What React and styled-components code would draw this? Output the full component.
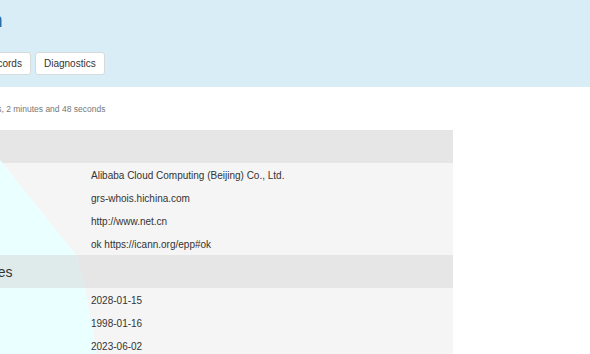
import React from "react";
import styled, { createGlobalStyle } from "styled-components";

const Global = createGlobalStyle`
  html, body { margin: 0; padding: 0; background: #fff; overflow: hidden; }
  body { font-family: "Liberation Sans", Arial, sans-serif; color: #333; }
`;

const Band = styled.header`
  background: #d9edf7;
  padding: 8px 0 12px;
`;

const Container = styled.div`
  margin-left: -100px;
  width: 553px;
`;

const Title = styled.h1`
  margin: 0;
  font-size: 20.5px;
  line-height: 23px;
  font-weight: 400;
  color: #2b6ca3;
  white-space: nowrap;
`;

const Nav = styled.nav`
  display: flex;
  gap: 4px;
  margin-top: 21px;
  padding-left: 2px;
`;

const Button = styled.button`
  height: 23px;
  padding: 0 8px;
  border: 1px solid #d6dadd;
  border-radius: 3px;
  background: #fff;
  color: #333;
  font-family: inherit;
  font-size: 10px;
  line-height: 1;
  white-space: nowrap;
`;

const Updated = styled.p`
  margin: 16px 0 15px;
  font-size: 8.5px;
  line-height: 12px;
  color: #777;
  white-space: nowrap;
`;

const TableWrap = styled.div`
  position: relative;
  width: 553px;
`;

const Overlay = styled.svg`
  position: absolute;
  left: 0;
  top: 0;
  z-index: 1;
  pointer-events: none;
`;

const Table = styled.table`
  width: 100%;
  border-collapse: collapse;
  border-spacing: 0;
  table-layout: fixed;
`;

const HeadCell = styled.th`
  height: 33px;
  padding: 0 13px;
  background: #e6e6e6;
  font-size: 14px;
  font-weight: 400;
  text-align: left;
  white-space: nowrap;
`;

const Cell = styled.td`
  height: 23px;
  padding: 0 6px;
  background: #f5f5f5;
  font-size: 10px;
  vertical-align: middle;
  white-space: nowrap;
`;

const Text = styled.span`
  position: relative;
  z-index: 2;
  top: ${(p) => (p.$nudge ? "1px" : "0")};
`;

const sections = [
  {
    title: "Registrar",
    rows: [
      ["Registrar", "Alibaba Cloud Computing (Beijing) Co., Ltd."],
      ["Whois Server", "grs-whois.hichina.com"],
      ["Referral URL", "http://www.net.cn"],
      ["Status", "ok https://icann.org/epp#ok"],
    ],
  },
  {
    title: "Important Dates",
    rows: [
      ["Expires On", "2028-01-15"],
      ["Registered On", "1998-01-16"],
      ["Updated On", "2023-06-02"],
    ],
  },
];

export default function App() {
  return (
    <>
      <Global />
      <Band>
        <Container>
          <Title>Site: net.cn</Title>
          <Nav>
            <Button>Whois</Button>
            <Button>DNS Records</Button>
            <Button>Diagnostics</Button>
          </Nav>
        </Container>
      </Band>
      <Container>
        <Updated>Updated 11 days, 23 hours, 2 minutes and 48 seconds</Updated>
        <TableWrap>
          <Overlay width="553" height="260" aria-hidden="true">
            <polygon points="0,0 76,0 176,125 185,158 197,224 200,260 0,260" fill="#eaffff" />
            <polygon points="0,125 176,125 185,158 0,158" fill="#dfeaea" />
          </Overlay>
          <Table>
            <colgroup>
              <col style={{ width: "185px" }} />
              <col />
            </colgroup>
            {sections.map((s) => (
              <tbody key={s.title}>
                <tr>
                  <HeadCell colSpan={2}>
                    <Text>{s.title}</Text>
                  </HeadCell>
                </tr>
                {s.rows.map(([k, v]) => (
                  <tr key={k}>
                    <Cell>
                      <Text $nudge>{k}</Text>
                    </Cell>
                    <Cell>
                      <Text $nudge>{v}</Text>
                    </Cell>
                  </tr>
                ))}
              </tbody>
            ))}
          </Table>
        </TableWrap>
      </Container>
    </>
  );
}
